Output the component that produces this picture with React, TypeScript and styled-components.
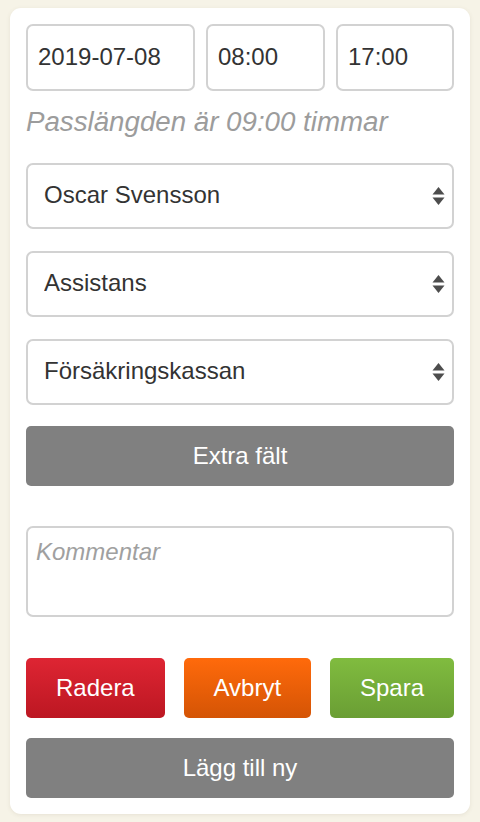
import React from "react";
import styled, { createGlobalStyle } from "styled-components";

const GlobalStyle = createGlobalStyle`
  html, body {
    margin: 0;
    padding: 0;
    background: #f6f3e7;
  }
  body {
    font-family: "Liberation Sans", Arial, sans-serif;
  }
  * { box-sizing: border-box; }
`;

const Page = styled.div`
  padding: 8px 10px 8px 10px;
  min-height: 822px;
`;

const Card = styled.form`
  background: #fff;
  border-radius: 11px;
  box-shadow: 0 1px 4px rgba(120, 110, 80, 0.12);
  padding: 16px 16px 16px 16px;
  display: flex;
  flex-direction: column;
`;

const TimeRow = styled.div`
  display: grid;
  grid-template-columns: 169px 119px 1fr;
  gap: 11px;
`;

const TextInput = styled.input`
  height: 67px;
  width: 100%;
  border: 2px solid #d2d2d2;
  border-radius: 7px;
  padding: 0 10px 2px 10px;
  font-family: "Liberation Sans", Arial, sans-serif;
  font-size: 24px;
  color: #333;
  background: #fff;
  outline: none;
`;

const Hint = styled.p`
  margin: 15px 0 0 0;
  line-height: 32px;
  font-size: 27.7px;
  font-style: italic;
  color: #9c9c9c;
`;

const SelectWrap = styled.div<{ $mt: number }>`
  position: relative;
  margin-top: ${(p) => p.$mt}px;
`;

const Select = styled.select`
  appearance: none;
  -webkit-appearance: none;
  width: 100%;
  height: 66px;
  border: 2px solid #d2d2d2;
  border-radius: 7px;
  padding: 0 40px 4px 16px;
  font-family: "Liberation Sans", Arial, sans-serif;
  font-size: 24px;
  color: #333;
  background: #fff;
  outline: none;
`;

const Arrows = styled.svg`
  position: absolute;
  right: 9px;
  top: 50%;
  transform: translateY(-50%);
  width: 13px;
  height: 18px;
  pointer-events: none;
`;

const Button = styled.button<{ $tone: "gray" | "red" | "orange" | "green" }>`
  height: 60px;
  border: none;
  border-radius: 5px;
  font-family: "Liberation Sans", Arial, sans-serif;
  font-size: 24px;
  color: #fff;
  padding: 0 30px;
  cursor: pointer;
  background: ${(p) =>
    p.$tone === "red"
      ? "linear-gradient(#de2533, #bc1722)"
      : p.$tone === "orange"
      ? "linear-gradient(#ff6a0b, #d45405)"
      : p.$tone === "green"
      ? "linear-gradient(#80bc3f, #6a9e34)"
      : "#808080"};
`;

const WideButton = styled(Button)<{ $mt: number }>`
  width: 100%;
  margin-top: ${(p) => p.$mt}px;
`;

const Comment = styled.textarea`
  margin-top: 40px;
  height: 91px;
  width: 100%;
  resize: none;
  border: 2px solid #d2d2d2;
  border-radius: 7px;
  padding: 10px 8px;
  font-family: "Liberation Sans", Arial, sans-serif;
  font-size: 24px;
  color: #333;
  outline: none;
  &::placeholder {
    color: #a0a0a0;
    font-style: italic;
  }
`;

const ActionRow = styled.div`
  margin-top: 41px;
  display: flex;
  justify-content: space-between;
`;

function SelectField({ value, mt }: { value: string; mt: number }) {
  return (
    <SelectWrap $mt={mt}>
      <Select defaultValue={value}>
        <option>{value}</option>
      </Select>
      <Arrows viewBox="0 0 13 18">
        <path d="M6.5 0 L12.5 7.5 L0.5 7.5 Z" fill="#4d4d4d" />
        <path d="M0.5 10.5 L12.5 10.5 L6.5 18 Z" fill="#4d4d4d" />
      </Arrows>
    </SelectWrap>
  );
}

export default function App() {
  return (
    <>
      <GlobalStyle />
      <Page>
        <Card onSubmit={(e) => e.preventDefault()}>
          <TimeRow>
            <TextInput defaultValue="2019-07-08" />
            <TextInput defaultValue="08:00" />
            <TextInput defaultValue="17:00" />
          </TimeRow>
          <Hint>Passlängden är 09:00 timmar</Hint>
          <SelectField value="Oscar Svensson" mt={25} />
          <SelectField value="Assistans" mt={22} />
          <SelectField value="Försäkringskassan" mt={22} />
          <WideButton type="button" $tone="gray" $mt={21}>
            Extra fält
          </WideButton>
          <Comment placeholder="Kommentar" />
          <ActionRow>
            <Button type="button" $tone="red">Radera</Button>
            <Button type="button" $tone="orange">Avbryt</Button>
            <Button type="button" $tone="green">Spara</Button>
          </ActionRow>
          <WideButton type="button" $tone="gray" $mt={20}>
            Lägg till ny
          </WideButton>
        </Card>
      </Page>
    </>
  );
}
